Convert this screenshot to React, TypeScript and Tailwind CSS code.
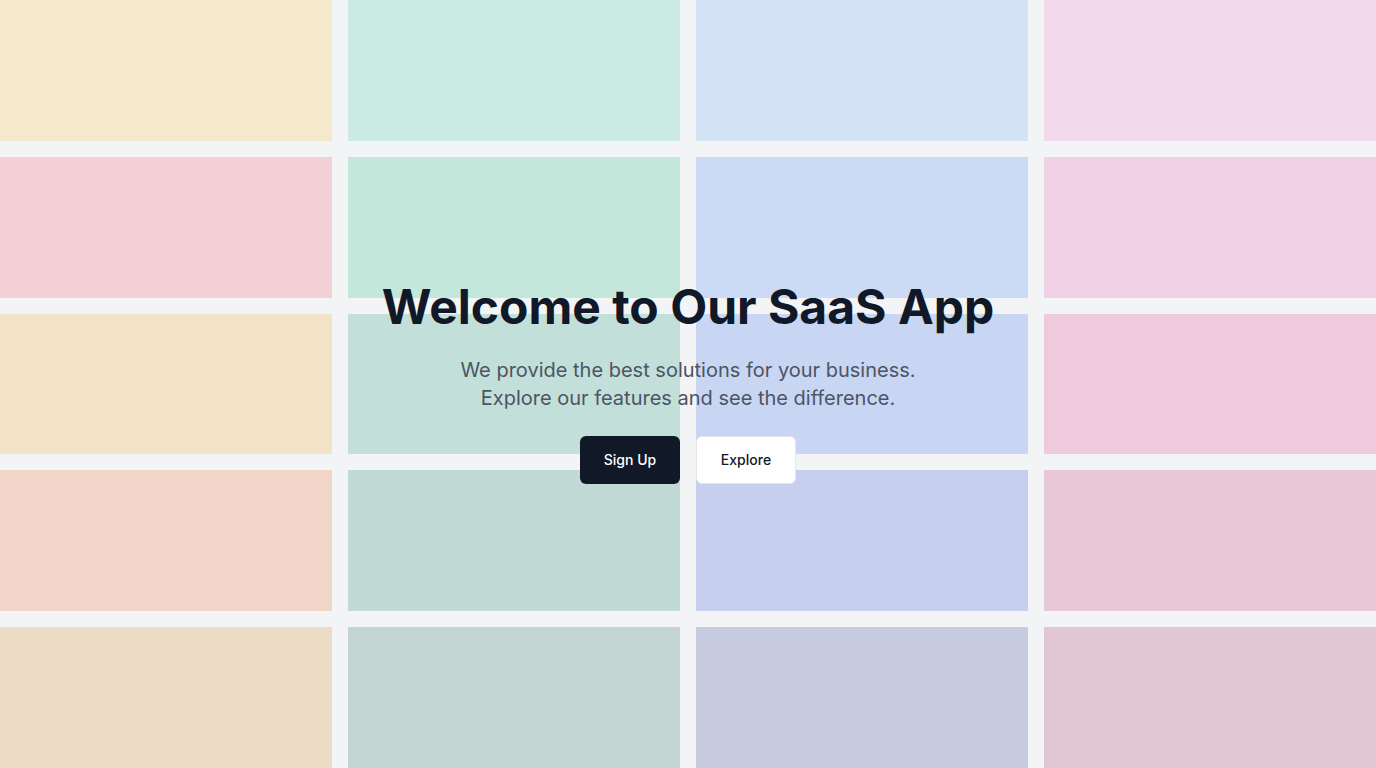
import React from "react";

const tiles = [
  "bg-[#f5e9cc]", "bg-[#cbebe2]", "bg-[#d4e2f5]", "bg-[#f2d9eb]",
  "bg-[#f2d0d5]", "bg-[#c4e7dc]", "bg-[#ccdbf5]", "bg-[#f1d1e5]",
  "bg-[#f3e3c6]", "bg-[#c3dfd9]", "bg-[#c8d5f3]", "bg-[#efcadd]",
  "bg-[#f0d5c8]", "bg-[#c1dad5]", "bg-[#c6d0ee]", "bg-[#e8c8d6]",
  "bg-[#ecdbc5]", "bg-[#c2d5d3]", "bg-[#c7cce0]", "bg-[#e1c7d3]",
];

export default function App() {
  return (
    <div className="relative h-[768px] w-full overflow-hidden bg-[#f3f4f6] font-['Inter',sans-serif]">
      <div className="grid h-full grid-cols-4 grid-rows-5 gap-4">
        {tiles.map((c, i) => (
          <div key={i} className={c} />
        ))}
      </div>
      <div className="absolute inset-0 flex flex-col items-center justify-center pb-[2px] text-center">
        <h1 className="text-5xl font-bold leading-none text-[#111827]">Welcome to Our SaaS App</h1>
        <p className="mt-[25px] text-xl leading-7 text-[#4b5563]">
          We provide the best solutions for your business.
          <br />
          Explore our features and see the difference.
        </p>
        <div className="mt-6 flex gap-4">
          <button className="h-12 w-[100px] rounded-md bg-[#111827] text-sm font-medium text-white">Sign Up</button>
          <button className="h-12 w-[100px] rounded-md border border-[#e5e7eb] bg-white text-sm font-medium text-[#111827]">Explore</button>
        </div>
      </div>
    </div>
  );
}
